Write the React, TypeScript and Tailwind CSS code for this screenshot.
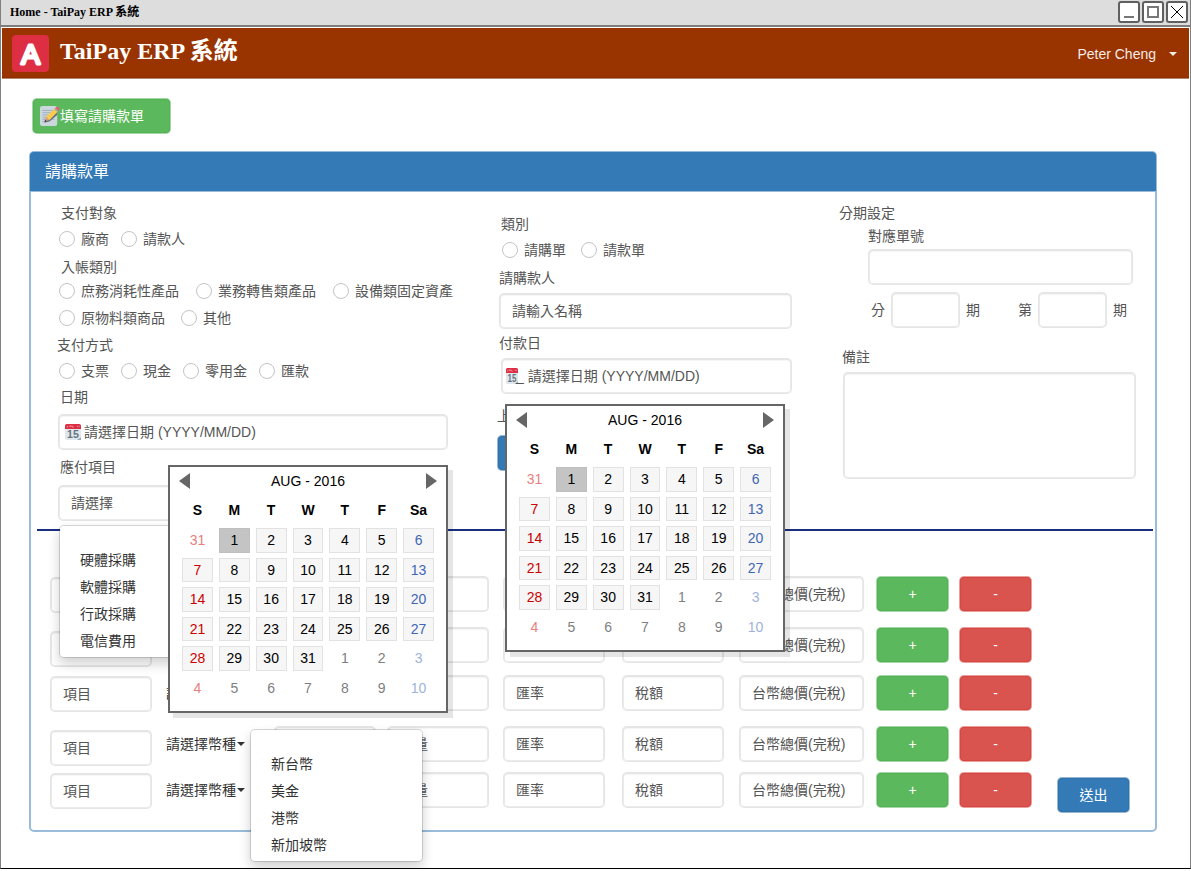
import React, { useId } from "react";

const inputLook =
  "rounded-[5px] border border-[#ccc]/50 bg-white bg-clip-padding shadow-[inset_0_0_0_1px_rgba(204,204,204,0.4),inset_0_2px_1px_rgba(0,0,0,0.04)]";
const buttonLook = "h-9 rounded-[5px] border bg-clip-padding text-sm leading-5 text-white";
const green = "border-[#4cae4c]/50 bg-[#5cb85c] shadow-[inset_0_0_0_1px_rgba(76,174,76,0.6)]";
const red = "border-[#d43f3a]/50 bg-[#d9534f] shadow-[inset_0_0_0_1px_rgba(212,63,58,0.6)]";
const blue = "border-[#2e6da4]/50 bg-[#337ab7] shadow-[inset_0_0_0_1px_rgba(46,109,164,0.6)]";

function LogoIcon() {
  return (
    <svg viewBox="0 0 37 37" className="size-[37px]" role="img" aria-label="TaiPay">
      <rect width="37" height="37" rx="4" fill="#dd2e44" />
      <text
        x="18.5"
        y="28.5"
        textAnchor="middle"
        fontFamily="Liberation Sans, sans-serif"
        fontSize="28"
        fill="#fff"
        stroke="#fff"
        strokeWidth="3"
        strokeLinejoin="round"
      >
        A
      </text>
    </svg>
  );
}

function MemoIcon() {
  return (
    <svg viewBox="0 0 36 36" className="size-5" aria-hidden="true">
      <rect x="0" y="0" width="31" height="36" rx="4" fill="#ccd6dd" />
      <path
        d="M5 8h20M5 12h20M5 16h20M5 20h20M5 24h20M5 28h6"
        stroke="#99aab5"
        strokeWidth="1.500"
        strokeLinecap="round"
      />
      <path d="M8 30l3-9 16-14 4 2v7L17 28z" fill="#66757f" />
      <path d="M8.500 27.500l3-8.500 6 6z" fill="#d99e82" />
      <path d="M8 28.500l1.300-3.800 2.600 2.600z" fill="#292f33" />
      <path d="M11 19.500L27 4l5.500 5.500L17 25z" fill="#ffcc4d" />
      <path d="M25.500 5.500l2-2 5.500 5.500-2 2z" fill="#99aab5" />
      <path d="M27.500 3.500l1.500-1.500c2-2 8 3 5.500 5.500l-1.500 1.500z" fill="#ea596e" />
    </svg>
  );
}

function CalendarIcon({ className }: { className: string }) {
  return (
    <svg viewBox="0 0 36 36" preserveAspectRatio="none" className={className} aria-hidden="true">
      <path d="M0 10h36v18l-7 8H4a4 4 0 0 1-4-4z" fill="#e1e8ed" />
      <path d="M36 29v7h-9z" fill="#99aab5" />
      <path d="M0 11V4a4 4 0 0 1 4-4h28a4 4 0 0 1 4 4v7z" fill="#dd2e44" />
      <path d="M6 4v3H4M11 7V4h3v3M17 4v3h3M28 7V4M32 7V4" stroke="#f4abb4" strokeWidth="1.600" fill="none" />
      <text
        x="18"
        y="32"
        textAnchor="middle"
        fontFamily="Liberation Sans, sans-serif"
        fontWeight="bold"
        fontSize="24"
        fill="#66757f"
      >
        15
      </text>
    </svg>
  );
}

function Caret({ className }: { className: string }) {
  return (
    <svg viewBox="0 0 8 4" className={className} aria-hidden="true">
      <path d="M0 0h8L4 4z" fill="currentColor" />
    </svg>
  );
}

function Radio({ name, label }: { name: string; label: string }) {
  const id = useId();
  return (
    <span className="flex items-center gap-1.5 whitespace-nowrap">
      <input
        id={id}
        type="radio"
        name={name}
        className="size-4 appearance-none rounded-full border border-[#c4c4c4] bg-white checked:border-[5px] checked:border-[#337ab7]"
      />
      <label htmlFor={id}>{label}</label>
    </span>
  );
}

function TextField({
  label,
  className,
  value,
  id,
}: {
  label?: string;
  className: string;
  value?: string;
  id?: string;
}) {
  return (
    <input
      id={id}
      type="text"
      aria-label={label}
      placeholder={value}
      className={`h-9 px-3 text-sm leading-5 text-[#555] placeholder:text-[#555] placeholder:opacity-100 ${inputLook} ${className}`}
    />
  );
}

const weekdays = ["S", "M", "T", "W", "T", "F", "Sa"];
const days: { n: number; out: boolean }[] = [
  { n: 31, out: true },
  ...Array.from({ length: 31 }, (_, i) => ({ n: i + 1, out: false })),
  ...Array.from({ length: 10 }, (_, i) => ({ n: i + 1, out: true })),
];

function dayStyle(index: number, n: number, out: boolean) {
  const col = index % 7;
  if (out) {
    const tone = col === 0 ? "text-[#e68080]" : col === 6 ? "text-[#9fb2db]" : "text-[#808080]";
    return `border-transparent ${tone}`;
  }
  if (n === 1) return "border-[#bfbfbf] bg-[#c4c4c4] text-black";
  const tone = col === 0 ? "text-[#cc0000]" : col === 6 ? "text-[#4066b8]" : "text-black";
  return `border-[#e2e2e2] bg-[#f6f6f6] ${tone}`;
}

function Calendar({ className }: { className: string }) {
  return (
    <div
      role="dialog"
      aria-label="AUG - 2016"
      className={`absolute z-20 w-[280px] border-2 border-[#666] bg-white px-3 pb-[11px] text-sm text-black shadow-[5px_5px_0_rgba(0,0,0,0.1)] ${className}`}
    >
      <div className="-mx-[3px] flex h-7 items-center justify-between">
        <button type="button" aria-label="上個月">
          <svg viewBox="0 0 11 16" className="h-4 w-[11px]" aria-hidden="true">
            <path d="M11 0v16L0 8z" fill="#666" />
          </svg>
        </button>
        <span>AUG - 2016</span>
        <button type="button" aria-label="下個月">
          <svg viewBox="0 0 11 16" className="h-4 w-[11px]" aria-hidden="true">
            <path d="M0 0v16l11-8z" fill="#666" />
          </svg>
        </button>
      </div>
      <div className="mt-[5px] grid grid-cols-7 gap-x-1.5 text-center font-bold leading-5">
        {weekdays.map((d, i) => (
          <span key={i}>{d}</span>
        ))}
      </div>
      <div className="mt-2 grid h-[172px] grid-cols-7 grid-rows-6 gap-x-1.5 gap-y-[5px]">
        {days.map((d, i) => (
          <button
            key={i}
            type="button"
            className={`flex items-center justify-center border leading-4 ${dayStyle(i, d.n, d.out)}`}
          >
            {d.n}
          </button>
        ))}
      </div>
    </div>
  );
}

function Menu({ label, items, className }: { label: string; items: string[]; className: string }) {
  return (
    <ul
      role="listbox"
      aria-label={label}
      className={`absolute z-10 w-[173px] rounded-[5px] border border-black/15 bg-white bg-clip-padding pb-0.5 pt-[21px] text-sm text-[#333] shadow-[0_6px_12px_rgba(0,0,0,0.175)] ${className}`}
    >
      {items.map((item) => (
        <li key={item} role="option" aria-selected="false" className="px-5 leading-[27px]">
          {item}
        </li>
      ))}
    </ul>
  );
}

const payables = ["硬體採購", "軟體採購", "行政採購", "電信費用"];
const currencies = ["新台幣", "美金", "港幣", "新加坡幣"];

const lines = [
  { id: 1, spacing: "h-[37px]", open: false },
  { id: 2, spacing: "mt-3.5 h-10", open: false },
  { id: 3, spacing: "mt-2 h-[37px]", open: false },
  { id: 4, spacing: "mt-3.5 h-10", open: true },
  { id: 5, spacing: "mt-1.5 h-[37px]", open: false },
];

function LineRow({ spacing, open }: { spacing: string; open: boolean }) {
  return (
    <div
      className={`grid grid-cols-[116fr_108fr_113fr_116fr_119fr_117fr_137fr_83fr_98fr] items-start ${spacing}`}
    >
      <TextField label="項目" value="項目" className="w-[102px] self-end" />
      <div className="relative flex h-9 items-center text-sm text-[#333]">
        <select
          aria-label="幣種"
          defaultValue=""
          className="w-[71px] appearance-none bg-transparent leading-5 outline-none"
        >
          <option value="">請選擇幣種</option>
          {currencies.map((c) => (
            <option key={c}>{c}</option>
          ))}
        </select>
        <Caret className="h-1 w-2" />
        {open && <Menu label="幣種" items={currencies} className="left-[84px] top-[3px]" />}
      </div>
      <TextField label="單價" value="單價" className="w-[102px]" />
      <TextField label="數量" value="數量" className="w-[102px]" />
      <TextField label="匯率" value="匯率" className="w-[102px]" />
      <TextField label="稅額" value="稅額" className="w-[102px]" />
      <TextField label="台幣總價(完稅)" value="台幣總價(完稅)" className="w-[125px]" />
      <button type="button" aria-label="新增" className={`w-[73px] ${buttonLook} ${green}`}>
        +
      </button>
      <button type="button" aria-label="刪除" className={`w-[73px] ${buttonLook} ${red}`}>
        -
      </button>
    </div>
  );
}

function WindowButton({ label, children }: { label: string; children: React.ReactNode }) {
  return (
    <button
      type="button"
      aria-label={label}
      className="size-[22px] rounded-[3px] border-2 border-[#606060] bg-white"
    >
      <svg viewBox="0 0 18 18" className="size-[18px]" fill="none" aria-hidden="true">
        {children}
      </svg>
    </button>
  );
}

export default function App() {
  return (
    <div className="border-x border-b border-[#808080] border-b-black bg-white font-['Liberation_Sans','Noto_Sans_CJK_TC',sans-serif] text-sm leading-5 text-[#555]">
      <div className="flex h-[27px] justify-between border-b-2 border-[#7d7d7d] bg-[#ddd] pl-[9px] pr-0.5">
        <h1 className="font-['Liberation_Serif','Noto_Sans_CJK_TC',serif] text-xs font-bold leading-6 text-black">
          Home - TaiPay ERP 系統
        </h1>
        <div className="flex gap-0.5 pt-px">
          <WindowButton label="最小化">
            <path d="M4 14h10" stroke="#777" strokeWidth="2" />
          </WindowButton>
          <WindowButton label="最大化">
            <rect x="4" y="4" width="10" height="10" stroke="#777" strokeWidth="2" />
          </WindowButton>
          <WindowButton label="關閉">
            <path d="M3 3l12 12M15 3L3 15" stroke="#000" strokeWidth="1" />
          </WindowButton>
        </div>
      </div>

      <header className="mx-px mt-px flex h-[51px] items-start justify-between border-b border-[#b8876b] bg-[#993300] px-[10px] shadow-[inset_0_-1px_0_#8a2e00]">
        <div className="flex gap-[11px] pt-[7px]">
          <LogoIcon />
          <h2 className="font-['Liberation_Serif','Noto_Sans_CJK_TC',serif] text-2xl font-bold leading-8 text-white">
            TaiPay ERP 系統
          </h2>
        </div>
        <button type="button" className="flex h-[51px] items-center gap-[13px] pr-0.5 text-[#f5ebe6]">
          Peter Cheng
          <Caret className="h-1 w-2" />
        </button>
      </header>

      <main className="pb-9 pl-7 pr-[33px] pt-[19px]">
        <button
          type="button"
          className={`ml-[3px] flex w-[139px] items-center pl-[7px] ${buttonLook} ${green}`}
        >
          <MemoIcon />
          填寫請購款單
        </button>

        <section className="mt-[17px] rounded-[5px] border-2 border-[#99bcdb]">
          <h3 className="-mx-px -mt-px rounded-t-[4px] border-b border-[#99bcdb] bg-[#337ab7] pl-[15px] text-base leading-[39px] text-white">
            請購款單
          </h3>

          <div className="grid grid-cols-[minmax(0,390fr)_minmax(0,293fr)_minmax(0,293fr)] gap-x-[51px] pl-[27px] pr-[19px] pt-[11px]">
            <div>
              <div className="pl-[3px]">支付對象</div>
              <div className="mt-1.5 flex gap-3 pl-px">
                <Radio name="payee" label="廠商" />
                <Radio name="payee" label="請款人" />
              </div>
              <div className="mt-2 pl-[3px]">入帳類別</div>
              <div className="-mr-2 mt-1 flex gap-[17px] pl-px">
                <Radio name="account" label="庶務消耗性產品" />
                <Radio name="account" label="業務轉售類產品" />
                <Radio name="account" label="設備類固定資產" />
              </div>
              <div className="mt-[7px] flex gap-4 pl-px">
                <Radio name="account" label="原物料類商品" />
                <Radio name="account" label="其他" />
              </div>
              <div className="-ml-px mt-[7px]">支付方式</div>
              <div className="mt-1.5 flex gap-3 pl-px">
                <Radio name="method" label="支票" />
                <Radio name="method" label="現金" />
                <Radio name="method" label="零用金" />
                <Radio name="method" label="匯款" />
              </div>
              <label htmlFor="date" className="mt-1.5 block pl-0.5">
                日期
              </label>
              <div className="relative mt-[7px]">
                <div className={`flex h-9 items-center gap-[3px] pl-1.5 pr-3 ${inputLook}`}>
                  <CalendarIcon className="size-4 shrink-0" />
                  <input
                    id="date"
                    type="text"
                    placeholder="請選擇日期 (YYYY/MM/DD)"
                    className="w-full bg-transparent outline-none placeholder:text-[#555] placeholder:opacity-100"
                  />
                </div>
                <Calendar className="right-0 top-[51px]" />
              </div>
              <label htmlFor="payable" className="mt-[7px] block pl-0.5">
                應付項目
              </label>
              <div className="relative mt-2">
                <select
                  id="payable"
                  defaultValue=""
                  className={`block h-9 w-full appearance-none px-3 ${inputLook}`}
                >
                  <option value="">請選擇</option>
                  {payables.map((p) => (
                    <option key={p}>{p}</option>
                  ))}
                </select>
                <Menu label="應付項目" items={payables} className="left-px top-10" />
              </div>
            </div>

            <div className="pt-[11px]">
              <div className="pl-0.5">類別</div>
              <div className="mt-1.5 flex gap-[15px] pl-[3px]">
                <Radio name="kind" label="請購單" />
                <Radio name="kind" label="請款單" />
              </div>
              <label htmlFor="applicant" className="mt-2 block">
                請購款人
              </label>
              <input
                id="applicant"
                type="text"
                placeholder="請輸入名稱"
                className={`mt-[5px] block h-9 w-full px-3 placeholder:text-[#555] placeholder:opacity-100 ${inputLook}`}
              />
              <label htmlFor="paydate" className="mt-1 block">
                付款日
              </label>
              <div className="relative ml-0.5 mt-[5px]">
                <div className={`flex h-9 items-center pl-1 pr-3 ${inputLook}`}>
                  <CalendarIcon className="h-4 w-3 shrink-0" />
                  <span className="-ml-0.5 mr-1" aria-hidden="true">
                    _
                  </span>
                  <input
                    id="paydate"
                    type="text"
                    placeholder="請選擇日期 (YYYY/MM/DD)"
                    className="w-full bg-transparent outline-none placeholder:text-[#555] placeholder:opacity-100"
                  />
                </div>
                <Calendar className="left-1 top-[46px]" />
              </div>
              <div className="-ml-0.5 mt-3">
                <div>上傳附件</div>
                <button
                  type="button"
                  aria-label="上傳附件"
                  className={`mt-[9px] block w-[73px] ${buttonLook} ${blue}`}
                />
              </div>
            </div>

            <div>
              <div className="-ml-1">分期設定</div>
              <div className="mt-[3px] pl-[25px] pr-[3px]">
                <label htmlFor="refno" className="block">
                  對應單號
                </label>
                <input id="refno" type="text" className={`mt-[3px] block h-9 w-full px-3 ${inputLook}`} />
                <div className="mt-[7px] flex items-center justify-between pl-[3px] pr-1.5">
                  <div className="flex items-center gap-1.5">
                    <label htmlFor="periods">分</label>
                    <TextField id="periods" className="w-[69px]" />
                    <span>期</span>
                  </div>
                  <div className="flex items-center gap-1.5">
                    <label htmlFor="nth">第</label>
                    <TextField id="nth" className="w-[69px]" />
                    <span>期</span>
                  </div>
                </div>
              </div>
              <label htmlFor="memo" className="-ml-px mt-[19px] block">
                備註
              </label>
              <textarea
                id="memo"
                className={`mt-[5px] block h-[107px] w-full resize-none px-3 py-2 ${inputLook}`}
              />
            </div>
          </div>

          <hr className="ml-1.5 mr-0.5 mt-2 h-0.5 border-0 bg-[#1b2f80]" />

          <div className="flex items-end pb-[17px] pl-[19px] pr-[25px] pt-[45px]">
            <div className="mb-1 flex-1">
              {lines.map((line) => (
                <LineRow key={line.id} spacing={line.spacing} open={line.open} />
              ))}
            </div>
            <button type="submit" className={`w-[73px] ${buttonLook} ${blue}`}>
              送出
            </button>
          </div>
        </section>
      </main>
    </div>
  );
}
